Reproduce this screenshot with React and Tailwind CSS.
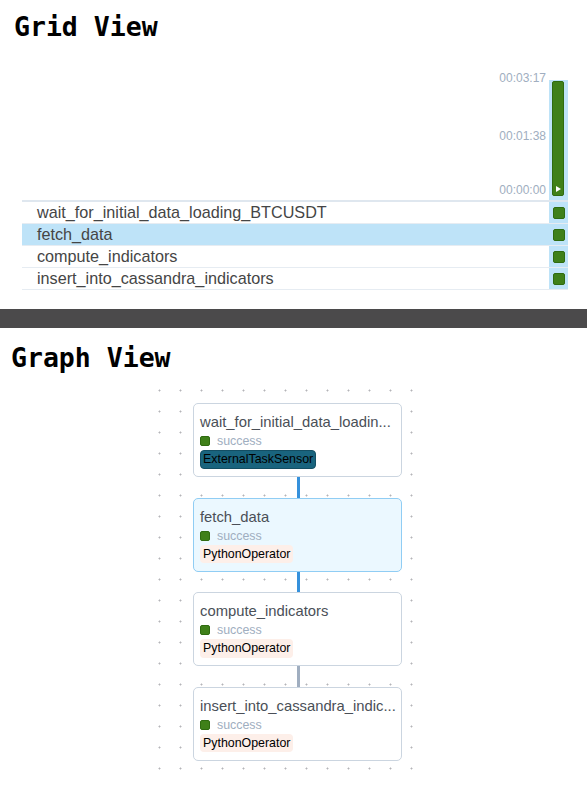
import React from "react";

const rows = [
  "wait_for_initial_data_loading_BTCUSDT",
  "fetch_data",
  "compute_indicators",
  "insert_into_cassandra_indicators",
];

const nodes = [
  { title: "wait_for_initial_data_loadin...", op: "ExternalTaskSensor", dark: true, active: false },
  { title: "fetch_data", op: "PythonOperator", dark: false, active: true },
  { title: "compute_indicators", op: "PythonOperator", dark: false, active: false },
  { title: "insert_into_cassandra_indic...", op: "PythonOperator", dark: false, active: false },
];

function Node({ n }) {
  return (
    <div
      className={
        "h-[74px] w-[209px] rounded-[5px] border px-[6px] pt-[9px] " +
        (n.active ? "border-[#90cdf4] bg-[#ebf8ff]" : "border-[#cbd5e0] bg-white")
      }
    >
      <div className="whitespace-nowrap text-[14.8px] leading-[19px] text-[#4a4f57]">{n.title}</div>
      <div className="flex h-[18px] items-center gap-[7px]">
        <div className="h-[10px] w-[10px] rounded-[2px] border border-[#2f6b10] bg-[#3f8019]" />
        <span className="text-[12.4px] leading-[16px] text-[#a0aec0]">success</span>
      </div>
      <div className="flex">
        <span
          className={
            "block rounded-[4px] text-[12.4px] text-black " +
            (n.dark
              ? "border border-[#144f64] bg-[#19647e] px-[2px] leading-[16.5px]"
              : "bg-[#fdefe9] px-[3px] leading-[18.5px]")
          }
        >
          {n.op}
        </span>
      </div>
    </div>
  );
}

export default function App() {
  return (
    <div className="h-[800px] w-[587px] overflow-hidden bg-white font-['Liberation_Sans',Arial,sans-serif]">
      {/* Grid view */}
      <div className="h-[309px]">
        <div className="pl-[14px] pt-[12px] font-['DejaVu_Sans_Mono',monospace] text-[26.5px] font-bold leading-[30px] text-black">
          Grid View
        </div>
        <div className="ml-[22px] mt-[28px] w-[546px]">
          <div className="flex h-[130px]">
            <div className="flex flex-1 flex-col items-end pr-[3px] text-[12px] leading-[14px] text-[#a0aec0]">
              <div className="mt-[1px]">00:03:17</div>
              <div className="mt-[44px]">00:01:38</div>
              <div className="mt-[40px]">00:00:00</div>
            </div>
            <div className="flex w-[19px] flex-col pt-[10px]">
              <div className="flex flex-1 flex-col bg-[#bee3f8] pb-[4px] pl-[3px] pr-[4px] pt-[1px]">
                <div className="flex flex-1 items-end justify-center rounded-[2px] border border-[#2f6b10] bg-[#3f8019] pb-[3px]">
                  <svg width="5" height="6" viewBox="0 0 5 6">
                    <path d="M0 0 L5 3 L0 6 Z" fill="white" />
                  </svg>
                </div>
              </div>
            </div>
          </div>
          <div className="h-[2px] bg-[#dfe7ef]" />
          {rows.map((r, i) => (
            <div
              key={r}
              className={
                "flex h-[22px] border-b border-[#e6ecf2] " + (i === 1 ? "bg-[#bee3f8]" : "")
              }
            >
              <div className="flex-1 pl-[15px] text-[16.2px] leading-[21px] text-[#454545]">{r}</div>
              <div className="flex w-[19px] items-center justify-center bg-[#bee3f8]">
                <div className="h-[12px] w-[12px] rounded-[2px] border border-[#2f6b10] bg-[#3f8019]" />
              </div>
            </div>
          ))}
        </div>
      </div>
      <div className="h-[19px] bg-[#4b4a4b]" />
      {/* Graph view */}
      <div className="pl-[11px] pt-[15px] font-['DejaVu_Sans_Mono',monospace] text-[26.5px] font-bold leading-[30px] text-black">
        Graph View
      </div>
      <div className="ml-[149px] mt-[7px] h-[400px] w-[273px] bg-[radial-gradient(circle,#b4b4b8_0.9px,transparent_1.1px)] bg-size-[21px_21px] bg-[length:21px_21px] pl-[44px] pt-[23px]">
        {nodes.map((n, i) => (
          <div key={i}>
            {i > 0 && (
              <div
                className={
                  "ml-[104px] h-[20.5px] w-[2.5px] " + (i <= 2 ? "bg-[#3591dc]" : "bg-[#a0aec0]")
                }
              />
            )}
            <Node n={n} />
          </div>
        ))}
      </div>
    </div>
  );
}
